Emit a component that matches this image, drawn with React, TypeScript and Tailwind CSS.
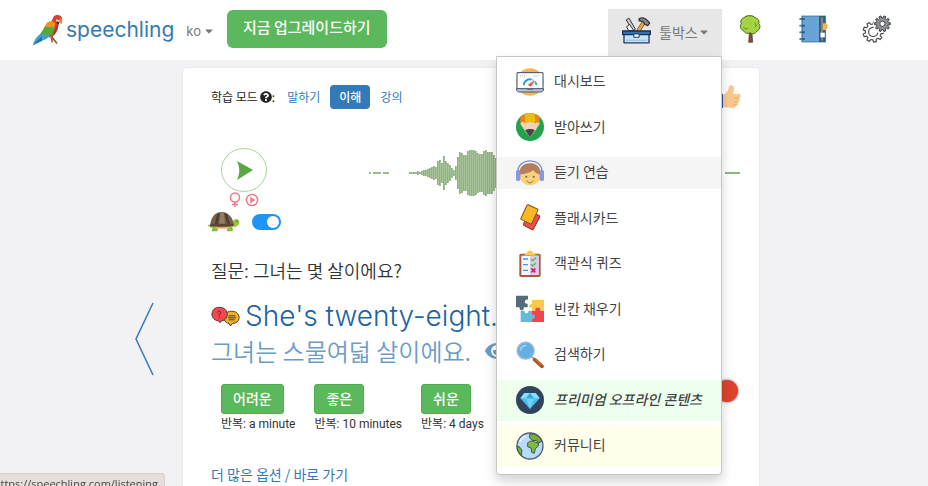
import type { ReactNode } from "react";
import { FaCaretDown, FaEye, FaQuestionCircle } from "react-icons/fa";

const KR = "font-['Noto_Sans_CJK_KR',sans-serif]";
const LATIN = "font-[Inter,'Noto_Sans_CJK_KR',sans-serif]";

function gear(cx: number, cy: number, outer: number, inner: number, teeth: number) {
  const pts: string[] = [];
  for (let i = 0; i < teeth; i++) {
    const step = (Math.PI * 2) / teeth;
    [
      [inner, -0.3],
      [outer, -0.2],
      [outer, 0.2],
      [inner, 0.3],
    ].forEach(([r, k]) => {
      const a = step * (i + k);
      pts.push(`${(cx + r * Math.cos(a)).toFixed(1)} ${(cy + r * Math.sin(a)).toFixed(1)}`);
    });
  }
  return `M${pts.join("L")}Z`;
}

function Parrot() {
  return (
    <svg viewBox="94 40 94 98" className="h-8 w-[31px]" aria-hidden="true">
      <path d="M150 104l20 26M153 113l3 14" stroke="#8d5a3c" strokeWidth="5" fill="none" />
      <path d="M160 48c10-9 25-4 26 7l-1 14c-5-5-9-4-10 1-2 18-11 32-26 43l-15-10z" fill="#dd3f2a" />
      <path d="M121 99l29 6c-8 10-17 14-27 17l-27 14c4-16 12-27 25-37z" fill="#3f9fd0" />
      <path d="M96 136l27-27 2 13z" fill="#246fa8" />
      <path d="M139 67c10-8 21-6 26 2l-4 17-31-3z" fill="#ef9224" />
      <path d="M133 78l32 4-9 24-37-5z" fill="#57a83c" />
      <path d="M156 106l9-24c5-6 9-12 8-19 4 22-5 38-20 49z" fill="#c22b23" />
      <ellipse cx="173" cy="60" rx="6" ry="5" fill="#f6e6e0" />
      <path d="M177 54c9-1 11 8 7 17-6-4-10-10-7-17z" fill="#e98a2e" />
      <path d="M169 62c6 0 8 5 8 10-6-1-9-4-8-10z" fill="#333" />
      <circle cx="174" cy="57" r="2" fill="#222" />
    </svg>
  );
}

function Toolbox() {
  return (
    <svg viewBox="66 46 88 84" className="h-7 w-[29px]" aria-hidden="true" strokeLinejoin="round">
      <path d="M79 57l8-5 19 32-4 7H90l2-10z" fill="#c9ced3" stroke="#333" strokeWidth="3" />
      <path d="M80 78l9-7 13 19H86z" fill="#eee" stroke="#333" strokeWidth="3" />
      <path d="M129 60l9 5-18 28h-12z" fill="#f2a33a" stroke="#333" strokeWidth="2" />
      <path d="M118 54c9-6 20-2 32 13l-6 8-9-5-6-8-11-2z" fill="#8a8a8a" stroke="#333" strokeWidth="4" />
      <path d="M72 100h76v27H72z" fill="#c5e4fb" stroke="#26384d" strokeWidth="4" />
      <path d="M68 91h84v11H68z" fill="#2c73b8" stroke="#1d3047" strokeWidth="4" />
      <path d="M102 100h16v10h-16z" fill="#fff" stroke="#26384d" strokeWidth="3" />
      <path d="M78 119h64" stroke="#83bce9" strokeWidth="3" />
    </svg>
  );
}

function Tree() {
  return (
    <svg viewBox="418 46 66 84" className="h-7 w-[22px]" aria-hidden="true" strokeLinejoin="round">
      <path d="M449 101l-2 27h12l-2-27 5-5h-17z" fill="#8a4b38" stroke="#4c3029" strokeWidth="2" />
      <path d="M432 55c6-9 29-10 35 0 10 2 13 10 10 16 8 9 2 20-5 23-6 10-17 10-20 5-9 5-17 1-20-6-10-3-13-14-7-21-4-8 0-15 7-17z" fill="#a3d243" stroke="#45611f" strokeWidth="3" />
      <path d="M431 82c4 7 10 7 13 4M465 70c6 3 6 9 1 12" stroke="#5f8a28" strokeWidth="3" fill="none" />
    </svg>
  );
}

function Notebook() {
  return (
    <svg viewBox="596 46 86 84" className="h-7 w-[29px]" aria-hidden="true">
      <path d="M603 48h73v80h-73z" fill="#26618f" />
      <path d="M606 50h50v76h-50z" fill="#68a4d6" />
      <path d="M656 50h5v76h-5z" fill="#3b5872" />
      <path d="M661 53h7v70h-7z" fill="#8d8272" />
      <path d="M667 71h11l3 6v8l-4 6h-10z" fill="#f4b450" />
      <path d="M660 99h13v14h-13z" fill="#fff" />
      {[58, 78, 98, 118].map((y) => (
        <g key={y}>
          <path d={`M597 ${y}h15`} stroke="#205379" strokeWidth="5" />
          <circle cx="610" cy={y} r="3" fill="#27618d" />
          <path d={`M599 ${y}h6`} stroke="#9cc4df" strokeWidth="1.5" />
        </g>
      ))}
    </svg>
  );
}

function Gears() {
  return (
    <svg viewBox="782 46 88 84" className="h-7 w-[29px]" aria-hidden="true" strokeLinejoin="round">
      <path d={gear(816, 97, 31, 24, 9)} fill="#fff" stroke="#4a4a4a" strokeWidth="3.5" />
      <path d="M817 83a14 14 0 1 0 13 16" fill="none" stroke="#4a4a4a" strokeWidth="3.5" />
      <circle cx="844" cy="72" r="28" fill="#fff" />
      <path d={gear(844, 72, 24, 18, 10)} fill="#8d9196" stroke="#3d4044" strokeWidth="3" />
      <circle cx="844" cy="72" r="8" fill="#fff" stroke="#3d4044" strokeWidth="3" />
    </svg>
  );
}

function MenuIcon({ box, children }: { box: string; children: ReactNode }) {
  return (
    <svg viewBox={box} className="size-7 shrink-0" aria-hidden="true" strokeLinejoin="round">
      {children}
    </svg>
  );
}

type Item = { label: string; icon: ReactNode; row?: string; link?: string };

const items: Item[] = [
  {
    label: "대시보드",
    icon: (
      <MenuIcon box="78 53 84 84">
        <circle cx="120" cy="95" r="41" fill="#f8b552" />
        <path d="M81 67h78v49H81z" fill="#fff" stroke="#3c4b66" strokeWidth="3" />
        <path d="M90 75h20M90 79h17M130 75h20M130 79h14" stroke="#b9c6d5" strokeWidth="2" strokeDasharray="4 2" />
        <path d="M101 105a19 19 0 0 1 22-18" fill="none" stroke="#2795d9" strokeWidth="6" />
        <path d="M123 87a19 19 0 0 1 8 4" fill="none" stroke="#9bd4ee" strokeWidth="6" />
        <path d="M135 94a19 19 0 0 1 4 10" fill="none" stroke="#3db794" strokeWidth="6" />
        <path d="M115 103l18-11-11 16z" fill="#e94b3c" stroke="#e94b3c" strokeWidth="2" />
        <path d="M79 115h82v5l-7 5H86l-7-5z" fill="#b9c3d1" stroke="#4c5b72" strokeWidth="3" />
        <path d="M109 115h22l-3 4h-16z" fill="#65748a" />
      </MenuIcon>
    ),
  },
  {
    label: "받아쓰기",
    icon: (
      <MenuIcon box="78 190 84 84">
        <circle cx="120" cy="232" r="42" fill="#23a24d" />
        <path d="M91 202c17-16 41-16 58 0v22h-58z" fill="#ee8519" />
        <path d="M105 192c9-3 21-3 30 0v31h-30z" fill="#edbb16" />
        <path d="M91 222c6-7 10-6 14 0 8-6 22-6 30 0 5-6 9-6 14 0l-15 24-14 16-14-16z" fill="#eed3b5" />
        <path d="M105 242c8-5 22-5 30 0l-15 20z" fill="#474747" />
      </MenuIcon>
    ),
  },
  {
    label: "듣기 연습",
    link: "bg-[#f5f5f5]",
    icon: (
      <MenuIcon box="78 327 84 84">
        <circle cx="120" cy="373" r="33" fill="#fbd17b" />
        <path d="M88 374c0-25 14-34 32-34s32 9 32 34c-9-1-17-5-22-13-8 7-24 11-42 13z" fill="#b77d5f" />
        <path d="M84 364c0-42 72-42 72 0" fill="none" stroke="#7489c5" strokeWidth="4" />
        <rect x="78" y="360" width="13" height="33" rx="5" fill="#839bdb" />
        <rect x="149" y="360" width="13" height="33" rx="5" fill="#839bdb" />
        <circle cx="109" cy="380" r="3" fill="#7b5b3e" />
        <circle cx="131" cy="380" r="3" fill="#7b5b3e" />
        <path d="M110 391c4 10 16 10 20 0" fill="none" stroke="#b76e40" strokeWidth="3" />
      </MenuIcon>
    ),
  },
  {
    label: "플래시카드",
    icon: (
      <MenuIcon box="78 42 84 84">
        <rect x="108" y="68" width="33" height="47" rx="3" transform="rotate(28 124 92)" fill="#ef4e4a" stroke="#873235" strokeWidth="3" />
        <rect x="100" y="48" width="36" height="49" rx="3" transform="rotate(25 117 73)" fill="#fbb822" stroke="#785526" strokeWidth="3" />
      </MenuIcon>
    ),
  },
  {
    label: "객관식 퀴즈",
    icon: (
      <MenuIcon box="78 179 84 84">
        <rect x="88" y="190" width="64" height="70" rx="5" fill="#a75a3d" />
        <path d="M94 196h52v58H94z" fill="#f5f4ff" />
        <path d="M120 196h26v58h-26z" fill="#d3cef8" />
        <path d="M104 195v-7h7c2-10 16-10 18 0h7v7z" fill="#ffc940" />
        <path d="M99 206h15M99 223h15M99 240h15" stroke="#3c9cea" strokeWidth="4" />
        <path d="M123 206l5 5 10-9M123 222l5 5 10-9" fill="none" stroke="#6dbb2e" strokeWidth="5" />
        <path d="M124 234l12 12M136 234l-12 12" stroke="#e51c4c" strokeWidth="5" />
      </MenuIcon>
    ),
  },
  {
    label: "빈칸 채우기",
    icon: (
      <MenuIcon box="78 315 84 84">
        <path d="M78 317h36v12c-11-4-14 14-1 12v11h-12c4 12-16 12-12 0H78z" fill="#536c78" />
        <path d="M126 330h36v33h-11c3-12-18-13-15 0h-10v-10c-12 4-12-14 0-10z" fill="#f7ca4b" />
        <path d="M92 362h12c-3 10 14 10 11 0h12v12c12-4 14 14 0 12v10H92z" fill="#67b9da" />
        <path d="M126 363h10c-4-14 19-14 15 0h11v33h-36v-10c12 3 12-15 0-12z" fill="#ef454e" />
      </MenuIcon>
    ),
  },
  {
    label: "검색하기",
    icon: (
      <MenuIcon box="78 31 84 84">
        <path d="M123 76l11 10" stroke="#9aa9b5" strokeWidth="6" />
        <path d="M134 87l22 20" stroke="#a95421" strokeWidth="11" strokeLinecap="round" />
        <path d="M135 86l20 18" stroke="#cf7734" strokeWidth="3" />
        <circle cx="107" cy="60" r="25" fill="#64afe5" stroke="#9cb6ce" strokeWidth="5" />
        <path d="M91 60c0-9 8-17 18-15" fill="none" stroke="#9bd1f3" strokeWidth="5" />
      </MenuIcon>
    ),
  },
  {
    label: "프리미엄 오프라인 콘텐츠",
    row: "bg-[#eeffee] font-medium italic",
    icon: (
      <MenuIcon box="78 167 84 84">
        <circle cx="120" cy="209" r="42" fill="#30445c" />
        <path d="M103 188h34l12 16-29 32-29-32z" fill="#4abdf0" />
        <path d="M103 188l-12 16h17l12-16 12 16h17l-12-16z" fill="#8bdcff" />
        <path d="M108 204h24l-12 32z" fill="#73d1fa" />
        <path d="M120 188l12 16h-24z" fill="#35a8df" />
      </MenuIcon>
    ),
  },
  {
    label: "커뮤니티",
    row: "bg-[#ffffeb]",
    icon: (
      <MenuIcon box="78 303 84 84">
        <circle cx="120" cy="345" r="39" fill="#b9dbfb" stroke="#4b6275" strokeWidth="4" />
        <path d="M89 333a36 36 0 0 1 19-19" fill="none" stroke="#e5f3ff" strokeWidth="6" />
        <path d="M120 309c16-2 30 7 35 22l-8 4-8-6-13-1-8-10z" fill="#78ad3e" stroke="#405c35" strokeWidth="3" />
        <path d="M113 336c6-8 17-7 23-2l10 2-2 10-8 7-3 14-8-3-2-13-10-4z" fill="#83b849" stroke="#405c35" strokeWidth="3" />
        <path d="M81 345l9 4 6 9-2 14c-8-6-13-15-13-27z" fill="#78ad3e" stroke="#405c35" strokeWidth="3" />
      </MenuIcon>
    ),
  },
];

function Header() {
  return (
    <header className="flex h-[60px] items-start bg-white pr-6 pl-8">
      <a href="#home" className="mt-3.5 flex items-center gap-[3px] text-[#337ab7]">
        <Parrot />
        <span className={`${LATIN} text-[21px] leading-8`}>speechling</span>
      </a>
      <button type="button" className={`${LATIN} mt-[22px] ml-3 flex items-center gap-0.5 text-[13px] leading-[18px] text-[#777]`}>
        ko <FaCaretDown className="size-3" />
      </button>
      <button type="button" className="mt-2.5 ml-3 h-[38px] rounded-md bg-[#5cb85c] px-4 pb-1 text-[15px] font-medium text-white">
        지금 업그레이드하기
      </button>
      <nav className="ml-auto flex pt-[9px]">
        <div className="relative">
          <button type="button" aria-expanded="true" className="flex h-12 w-[114px] items-center bg-[#e7e7e7] pb-1.5 pl-3.5 text-sm text-[#777]">
            <Toolbox />
            <span className="mt-1 ml-2">툴박스</span>
            <FaCaretDown className="mt-1 size-3" />
          </button>
          <ToolMenu />
        </div>
        <button type="button" aria-label="나무" className="flex h-10 w-14 items-center justify-center"><Tree /></button>
        <button type="button" aria-label="노트" className="flex h-10 w-[70px] items-center justify-center"><Notebook /></button>
        <button type="button" aria-label="설정" className="flex h-10 w-14 items-center justify-center"><Gears /></button>
      </nav>
    </header>
  );
}

function ToolMenu() {
  return (
    <div className="absolute top-[47px] right-0 z-10 w-[226px] rounded-b border border-[#c6c6c6] bg-white pt-1 pb-2 shadow-[0_6px_12px_rgba(0,0,0,0.18)]">
      <ul className="flex h-[405px] flex-col justify-between">
        {items.map((item) => (
          <li key={item.label} className={`flex h-[41px] items-center ${item.row ?? ""}`}>
            <a href="#tool" className={`flex h-8 w-full items-center gap-2.5 pl-[19px] text-sm text-[#444] ${item.link ?? ""}`}>
              {item.icon}
              <span className="pb-[3px]">{item.label}</span>
            </a>
          </li>
        ))}
      </ul>
    </div>
  );
}

/* Half heights of the bars, one bar every two pixels; 0 is silence. */
const wave = [
  1, 0, 1, 1, 1, 1, 0, 1, 1, 1, 0, 0, 0, 0, 0, 0, 0, 0, 0, 0, 1, 1, 1, 1, 2, 1, 2, 3, 3, 4, 5, 6, 7, 6, 12, 13, 10,
  17, 12, 10, 8, 5, 3, 7, 16, 21, 20, 18, 18, 22, 23, 23, 23, 22, 20, 19, 19, 22, 23, 21, 21, 21, 18, 15, 11,
  9, 12, 14, 10, 8, 6, 4, 3, 2, 1, 1,
];

function Waveform() {
  return (
    <svg viewBox="0 0 372 48" className="h-12 w-[372px]" role="img" aria-label="음성 파형">
      {wave.map((h, i) =>
        h ? (
          <g key={i}>
            <rect x={1 + i * 2} y={25 - h} width="2" height={h * 2} fill="#a5c298" />
            <rect x={1 + i * 2} y={25 - h} width="1" height={h * 2} fill="#8fb381" />
          </g>
        ) : null,
      )}
      <path d="M340 25h14M357 25h15" stroke="#8fb381" strokeWidth="2" />
    </svg>
  );
}

function Turtle() {
  return (
    <svg viewBox="69 438 101 64" className="h-[21px] w-[33px]" aria-hidden="true">
      <path d="M70 480l16 1 8 6-14 1z" fill="#76b82a" />
      <path d="M146 477c2-18 20-20 22-5-1 10-8 12-14 16z" fill="#92c83e" />
      <path d="M87 485l17 1-3 14H83zM129 485h18l1 15h-17z" fill="#84bd32" />
      <path d="M94 485h44v7H94z" fill="#f0b36b" />
      <path d="M79 482c2-56 68-54 72 0-24 7-49 7-72 0z" fill="#75604b" />
      <path d="M100 447l-8 34h10l8-37zM121 443l10 38h9l-9-34z" fill="#51402f" />
      <path d="M109 444h12l3 38h-18z" fill="#967b5c" />
      <path d="M79 477h71v8H79z" fill="#5d4635" />
      <circle cx="161" cy="469" r="2" fill="#333" />
    </svg>
  );
}

function Player() {
  return (
    <section className="mt-[37px] flex items-start justify-between pr-[19px]">
      <div className="flex flex-col items-center">
        <button type="button" aria-label="재생">
          <svg viewBox="0 0 46 44" className="h-11 w-[46px]">
            <ellipse cx="23" cy="22" rx="22.500" ry="21.500" fill="none" stroke="#aad49a" />
            <path d="M16 13l16 9-16 10c3-7 3-12 0-19z" fill="#5aa744" />
          </svg>
        </button>
        <div className="flex h-4 items-center gap-1">
          <svg viewBox="0 0 12 16" className="h-4 w-3" fill="none" stroke="#ee7a8a" strokeWidth="1.500">
            <circle cx="6" cy="5.5" r="4.500" />
            <path d="M6 10v5M3 12.500h6" />
          </svg>
          <svg viewBox="0 0 14 14" className="size-3.5" fill="none" stroke="#ee7a8a" strokeWidth="1.500">
            <circle cx="7" cy="7" r="5.600" />
            <path d="M6 5l3 2-3 2z" fill="#ee7a8a" />
          </svg>
        </div>
        <label className="mt-[3px] flex items-center gap-3">
          <Turtle />
          <input
            type="checkbox"
            defaultChecked
            aria-label="느린 재생"
            className="flex h-4 w-[29px] appearance-none items-center justify-end rounded-full bg-[#2194f3] px-0.5 before:size-3 before:rounded-full before:bg-white"
          />
        </label>
      </div>
      <Waveform />
    </section>
  );
}

function ThumbUp() {
  return (
    <svg viewBox="0 0 32 24" className="h-6 w-8" aria-hidden="true">
      <path d="M2 9h12v14H2z" fill="#2e5b9c" />
      <circle cx="11" cy="20" r="1.500" fill="#f2b84b" />
      <path d="M14 10c4-2 6-5 6-9 3-2 6 0 5 4l-1 4h6c3 1 2 4 0 4 2 2 1 4-1 4 1 2 0 3-2 3 0 2-1 3-3 3l-10-1z" fill="#fbc890" />
      <path d="M25 13h5M25 17h4M24 20h4" stroke="#e7a86d" />
    </svg>
  );
}

function Bubbles() {
  return (
    <svg viewBox="80 171 88 62" className="h-[21px] w-[29px]" aria-hidden="true" strokeLinejoin="round">
      <path d="M143 186c29 0 30 37 2 37l-6 8-4-8c-24-3-21-37 8-37z" fill="#f3b02e" stroke="#493d2c" strokeWidth="3" />
      <path d="M133 200h21M132 206h24M134 212h18" stroke="#493d2c" strokeWidth="3" />
      <path d="M105 174c31 0 31 39 7 41l-4 6-6-6c-27-2-25-41 3-41z" fill="#f7464d" stroke="#493d3d" strokeWidth="3" />
      <path d="M100 190c1-7 11-5 9 1l-4 5v4M105 204v3" stroke="#52202a" strokeWidth="3" fill="none" />
    </svg>
  );
}

const ratings = [
  { label: "어려운", repeat: "반복: a minute" },
  { label: "좋은", repeat: "반복: 10 minutes" },
  { label: "쉬운", repeat: "반복: 4 days" },
];

function LessonCard() {
  return (
    <main className="mt-2 min-w-0 flex-1 rounded-t-sm bg-white pl-6 shadow-[0_0_2px_rgba(60,60,120,0.15)]">
      <div className="flex items-start justify-between pt-[17px] pr-[18px] pl-1 text-xs">
        <div className="flex h-[26px] items-center pb-0.5 text-[#222]">
          <span>학습 모드</span>
          <FaQuestionCircle className="ml-0.5 size-3" />
          <span>:</span>
          <a href="#speaking" className="ml-3 text-[#337ab7]">말하기</a>
          <a href="#comprehension" className="ml-2.5 rounded bg-[#337ab7] px-[9px] py-1 font-medium text-white">이해</a>
          <a href="#lecture" className="ml-2.5 text-[#337ab7]">강의</a>
        </div>
        <ThumbUp />
      </div>
      <Player />
      <div className="pl-1">
        <p className="mt-[26px] text-lg leading-6 font-[350] text-[#333]">질문: 그녀는 몇 살이에요?</p>
        <div className="mt-4 flex items-center gap-[5px]">
          <Bubbles />
          <h1 className={`${LATIN} text-[28px] leading-9 font-[350] whitespace-nowrap text-[#1c63a5]`}>She's twenty-eight.</h1>
        </div>
        <div className="mt-px flex items-center gap-3.5 text-2xl leading-8 font-[350] text-[#6b9cc9]">
          <p>그녀는 스물여덟 살이에요.</p>
          <FaEye className="size-6" />
        </div>
      </div>
      <div className="mt-[17px] flex items-start gap-[19px] pr-[21px] pl-3.5">
        {ratings.map((r) => (
          <div key={r.label}>
            <button type="button" className="flex h-[30px] items-center rounded-[3px] border border-[#4cae4c] bg-[#5cb85c] px-[11px] pb-0.5 text-sm font-medium text-white">
              {r.label}
            </button>
            <p className="font-[Roboto,'Noto_Sans_CJK_KR',sans-serif] text-xs leading-5 whitespace-nowrap text-[#333]">{r.repeat}</p>
          </div>
        ))}
        <button type="button" aria-label="녹음" className="-mt-1 ml-auto size-[22px] rounded-full bg-[#dd432d] shadow-[0_0_3px_rgba(0,0,0,0.6)]" />
      </div>
      <a href="#more" className="mt-[30px] ml-1 block text-sm leading-5 text-[#337ab7]">더 많은 옵션 / 바로 가기</a>
    </main>
  );
}

export default function App() {
  return (
    <div className={`${KR} flex h-screen flex-col overflow-hidden bg-[#f2f2f5]`}>
      <Header />
      <div className="flex flex-1">
        <div className="flex w-[183px] justify-end pr-7">
          <button type="button" aria-label="이전" className="mt-60 h-20 w-5">
            <svg viewBox="0 0 20 80" className="h-20 w-5">
              <path d="M18 3L1 39l17 36" fill="none" stroke="#337ab7" strokeWidth="1.500" />
            </svg>
          </button>
        </div>
        <LessonCard />
        <div className="w-[169px]" />
      </div>
      <div className="fixed bottom-0 left-0 flex h-[13px] w-[165px] justify-end overflow-hidden rounded-tr border-t border-r border-[#d5cecb] bg-[#e5dedb] pr-1.5 font-['Open_Sans',sans-serif] text-[11px] leading-5 text-[#444]">
        https://speechling.com/listening
      </div>
    </div>
  );
}
